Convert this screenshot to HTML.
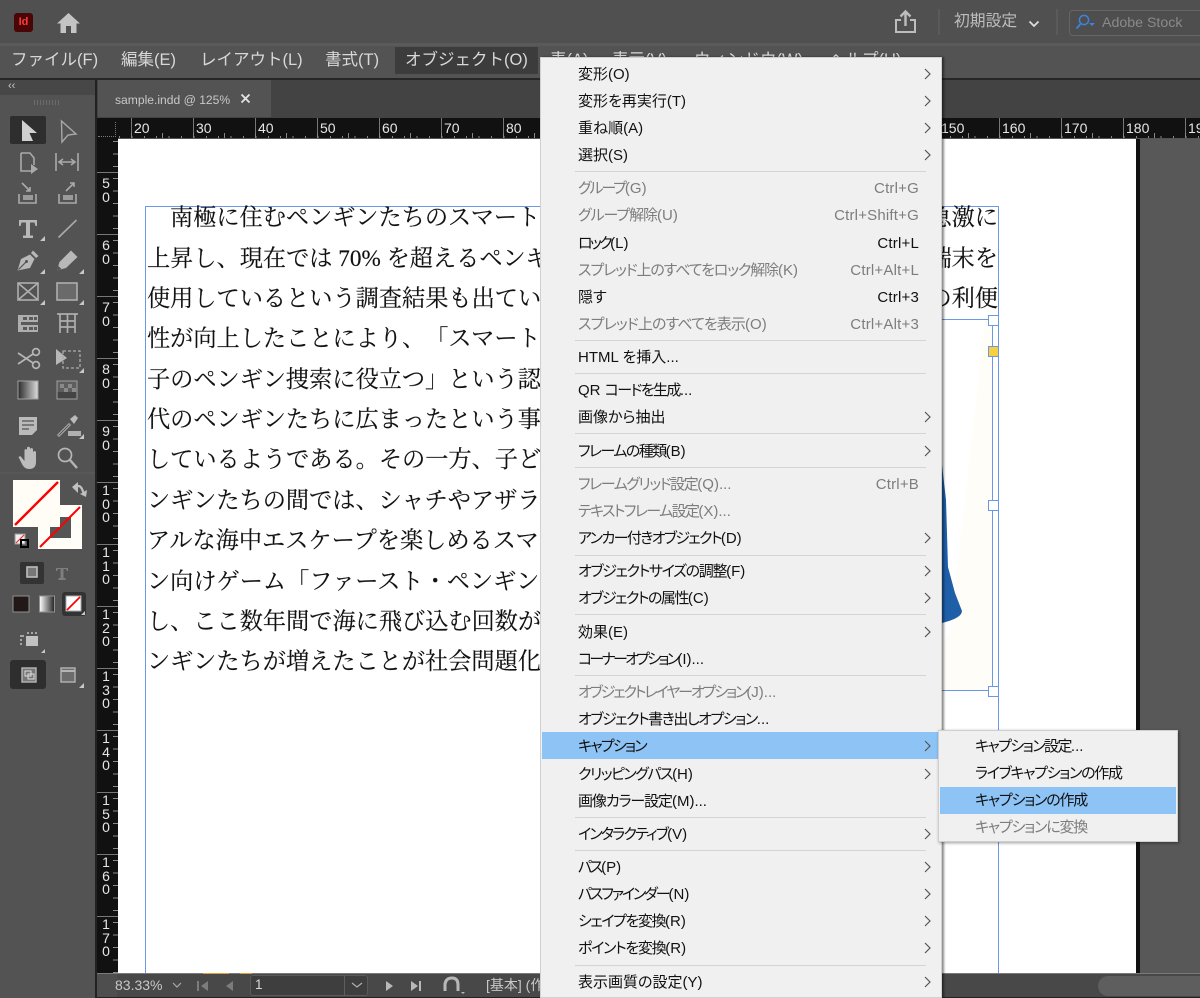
<!DOCTYPE html>
<html lang="ja"><head><meta charset="utf-8"><title>InDesign</title>
<style>
html,body{margin:0;padding:0;background:#535353}
#r{position:relative;width:1200px;height:998px;overflow:hidden;background:#535353;font-family:"Liberation Sans","Noto Sans CJK JP",sans-serif}
#r div,#r span,#r svg{position:absolute}
i{font-style:normal;letter-spacing:0}
.mb{top:48px;height:24px;line-height:24px;font-size:16.5px;color:#d8d8d8;white-space:nowrap}
.h{top:118px;height:20px;line-height:21px;font-size:14px;color:#e6e6e6;background:none}
.v{left:100px;width:12px;font-size:14px;line-height:14px;color:#e6e6e6;text-align:center}
.t{left:147px;height:40px;line-height:40px;font-size:23.2px;color:#111;white-space:nowrap;font-family:"Liberation Serif","Noto Serif CJK JP","Noto Serif CJK SC",serif;text-spacing-trim:space-all;-webkit-text-stroke:.15px #111;margin-top:1px}
.rt{left:auto;right:202px}
.m{left:578px;height:20px;line-height:20px;font-size:15px;color:#111;white-space:nowrap;font-feature-settings:"palt";margin-top:1px}
.k{left:auto;right:281px;height:20px;line-height:20px;font-size:15px;letter-spacing:.2px;color:#111;white-space:nowrap;margin-top:1px}
.s{left:975px;height:20px;line-height:20px;font-size:15px;color:#111;white-space:nowrap;font-feature-settings:"palt";margin-top:1px}
.m.d,.k.d,.s.d{color:#7d7d7d}
.sep{left:575px;width:351px;height:1px;background:#d4d4d4}
svg{overflow:visible}
</style></head><body><div id="r">

<!-- top bar -->
<div style="left:0;top:0;width:1200px;height:43px;background:#505050"></div>
<div style="left:0;top:43px;width:1200px;height:3px;background:#5a5a5a"></div>
<div style="left:0;top:46px;width:1200px;height:32px;background:#535353"></div>
<div style="left:14px;top:13px;width:19px;height:19px;background:#4a0606;border-radius:3px"></div>
<span style="left:14px;top:13px;width:19px;height:19px;line-height:19px;text-align:center;font-size:11px;font-weight:bold;color:#ff3a3a">Id</span>
<svg style="left:56px;top:12px" width="25" height="22" viewBox="0 0 25 22"><path d="M12.5 1 L24 11.5 L20.5 11.5 L20.5 21 L15 21 L15 14 L10 14 L10 21 L4.5 21 L4.5 11.5 L1 11.5 Z" fill="#c4c4c4"/></svg>
<svg style="left:894px;top:10px" width="24" height="24" viewBox="0 0 24 24"><path d="M7 10 H2 V22 H21 V10 H16" fill="none" stroke="#bdbdbd" stroke-width="2"/><path d="M11.5 16 V2 M6.500 6.500 L11.500 1.500 L16.500 6.500" fill="none" stroke="#bdbdbd" stroke-width="2.400"/></svg>
<div style="left:938px;top:9px;width:2px;height:26px;background:#5a5a5a"></div>
<span style="left:954px;top:12px;font-size:15.800px;line-height:20px;color:#bdbdbd;white-space:nowrap">初期設定</span>
<svg style="left:1028px;top:20px" width="12" height="8" viewBox="0 0 12 8"><path d="M1.500 1.500 L6 6 L10.500 1.500" fill="none" stroke="#ddd" stroke-width="1.800"/></svg>
<div style="left:1056px;top:9px;width:2px;height:26px;background:#5a5a5a"></div>
<div style="left:1069px;top:10px;width:140px;height:24px;border:1px solid #656565;border-radius:4px;background:#4e4e4e"></div>
<svg style="left:1075px;top:14px" width="24" height="16" viewBox="0 0 24 16"><circle cx="9" cy="6" r="4.600" fill="none" stroke="#3f82e0" stroke-width="1.500"/><path d="M5.500 10 L1.500 14.500" stroke="#3f82e0" stroke-width="1.800"/><path d="M14 9 H20 L17 12 Z" fill="#3f82e0"/></svg>
<span style="left:1102px;top:13px;font-size:14.200px;line-height:20px;color:#8a8a8a;white-space:nowrap">Adobe Stock</span>

<!-- menu bar -->
<span class="mb" style="left:11px">ファイル(F)</span>
<span class="mb" style="left:121px">編集(E)</span>
<span class="mb" style="left:200px">レイアウト(L)</span>
<span class="mb" style="left:325px">書式(T)</span>
<div style="left:395px;top:47px;width:143px;height:27px;background:#3c3c3c"></div>
<span class="mb" style="left:405px">オブジェクト(O)</span>
<span class="mb" style="left:550px">表(A)</span>
<span class="mb" style="left:612px">表示(V)</span>
<span class="mb" style="left:694px">ウィンドウ(W)</span>
<span class="mb" style="left:829px">ヘルプ(H)</span>
<div style="left:0;top:78px;width:1200px;height:2px;background:#262626"></div>

<!-- tab bar -->
<div style="left:97px;top:80px;width:1103px;height:38px;background:#434343"></div>
<div style="left:98px;top:80px;width:173px;height:37px;background:#535353"></div>
<span style="left:115px;top:90px;font-size:12.100px;line-height:20px;color:#c8c8c8;white-space:nowrap">sample.indd @ 125%</span>
<svg style="left:240px;top:93px" width="11" height="11" viewBox="0 0 11 11"><path d="M1.500 1.500 L9.500 9.500 M9.500 1.500 L1.500 9.500" stroke="#e4e4e4" stroke-width="1.800"/></svg>

<!-- left panel -->
<div style="left:0;top:80px;width:95px;height:918px;background:#535353"></div>
<div style="left:0;top:80px;width:95px;height:15px;background:#474747"></div>
<span style="left:8px;top:80px;font-size:11px;line-height:13px;color:#c8c8c8">‹‹</span>
<div style="left:34px;top:100px;width:26px;height:5px;background:repeating-linear-gradient(90deg,#6c6c6c 0 1px,#535353 1px 3px)"></div>
<div style="left:95px;top:80px;width:2px;height:918px;background:#222"></div>

<!-- left tools -->
<svg style="left:0;top:110px" width="95" height="600" viewBox="0 110 95 600">
 <rect x="10" y="116" width="36" height="28" rx="2" fill="#2e2e2e"/>
 <path d="M22 120 L37 133 L29.500 133 L33 141 L22 141 Z" fill="#d0d0d0"/>
 <path d="M61.500 121 L76 134 L68 135 L62 142 Z" fill="none" stroke="#a8a8a8" stroke-width="1.400"/>
 <g fill="none" stroke="#aaa" stroke-width="1.600">
  <path d="M21 153 H30 L34 158 V165 M21 153 V171 H31"/>
  <path d="M56 153 V171 M78 153 V171 M60 162 H74 M63 159 L59 162 L63 165 M71 159 L75 162 L71 165"/>
  <path d="M19 194 V203 H36 V194 M22 183 L30 191 M26 191 H30 V187"/>
  <path d="M59 194 V203 H76 V194 M66 191 L74 183 M70 183 H74 V187"/>
 </g>
 <path d="M31 164 L38 169 L31 174 Z" fill="#aaa"/>
 <rect x="23" y="195" width="10" height="5" fill="#9a9a9a"/><rect x="63" y="195" width="10" height="5" fill="#9a9a9a"/>
 <!-- T, line -->
 <path d="M19 220 H37 V226 H35.500 L34.500 222.500 H30 V235.500 H33 V238 H23 V235.500 H26 V222.500 H21.500 L20.500 226 H19 Z" fill="#b8b8b8"/>
 <path d="M58.500 237.500 L76.500 220" stroke="#aaa" stroke-width="1.600"/>
 <!-- pen nib -->
 <path d="M17.500 270.500 L21 259 L30 254.500 L34.500 259 L30 268 Z" fill="#b8b8b8"/>
 <path d="M31 253 L33 250.500 L38.500 256 L36 258 Z" fill="#b8b8b8"/>
 <path d="M18.500 269.500 L26 262" stroke="#535353" stroke-width="1.200"/><circle cx="26.500" cy="261.500" r="1.500" fill="#535353"/>
 <!-- pencil -->
 <path d="M57 270.500 L59.500 262 L71 250.500 L77.500 257 L66 268 Z" fill="#b8b8b8"/>
 <path d="M57 270.500 L58.400 266 L61.500 269 Z" fill="#535353"/>
 <!-- frame, rect -->
 <g fill="none" stroke="#aeaeae" stroke-width="1.600"><rect x="18" y="283" width="20" height="17"/><path d="M18 283 L38 300 M38 283 L18 300"/></g>
 <rect x="57" y="283" width="20" height="17" fill="#6a6a6a" stroke="#aeaeae" stroke-width="1.600"/>
 <!-- tables -->
 <rect x="18" y="315" width="20" height="17" fill="#aeaeae"/>
 <path d="M23 317 h4v3h-4z M29 317 h4v3h-4z M34 317 h3v3h-3z M23 327 h4v3h-4z M29 327 h4v3h-4z M34 327 h3v3h-3z" fill="#5a5a5a"/>
 <rect x="21" y="322" width="17" height="3" fill="#5a5a5a"/>
 <g fill="none" stroke="#aeaeae" stroke-width="1.700"><path d="M57 314 H78 M60 314 V333 M67.500 314 V333 M75 314 V333 M60 321 H75 M60 327 H75"/></g>
 <!-- scissors, transform -->
 <g fill="none" stroke="#b5b5b5" stroke-width="1.700"><circle cx="36" cy="352" r="3.400"/><circle cx="36" cy="365" r="3.400"/><path d="M33 354 L18 364 M33 363 L18 353"/></g>
 <path d="M56 349 L67 358 L56 365 Z" fill="#b8b8b8"/>
 <rect x="63" y="351" width="17" height="17" fill="none" stroke="#aaa" stroke-width="1.300" stroke-dasharray="3 2"/>
 <!-- gradients -->
 <defs><linearGradient id="g1"><stop offset="0" stop-color="#2b2b2b"/><stop offset="1" stop-color="#dcdcdc"/></linearGradient></defs>
 <rect x="18" y="381" width="20" height="18" fill="url(#g1)" stroke="#a0a0a0"/>
 <rect x="57" y="381" width="20" height="18" fill="#5e5e5e" stroke="#a0a0a0"/>
 <path d="M57.500 392 H76.500 V398.500 H57.500 Z" fill="#444"/>
 <path d="M60 384 h4v4h-4z M68 384 h4v4h-4z M64 388 h4v4h-4z M72 388 h4v4h-4z" fill="#8a8a8a"/>
 <!-- note, eyedropper -->
 <path d="M19 417 H37 V430 L32 435 H19 Z" fill="#bababa"/>
 <path d="M22 421 H34 M22 425 H34 M22 429 H29" stroke="#535353" stroke-width="1.200"/>
 <path d="M58 436 L70 424" stroke="#b5b5b5" stroke-width="3"/><path d="M58.500 435.500 L69.500 424.500" stroke="#535353" stroke-width="1"/><path d="M70 419 L75 415 L78 418 L74 424 Z" fill="#bababa"/>
 <rect x="68" y="431" width="13" height="5" fill="#b0b0b0"/>
 <!-- hand, magnifier -->
 <path d="M18.500 457 Q20.500 455 22 458 L24.500 461 V450 Q25.500 448 27 450 V458 V447.500 Q28.500 446 30 447.500 V458 V449 Q31.500 447 33 449 V459 V452 Q34.500 450 36 452 V462 Q36 469 29 469 Q25 469 22.500 465 Z" fill="#bcbcbc"/>
 <circle cx="65" cy="455" r="6.500" fill="none" stroke="#b5b5b5" stroke-width="1.700"/><path d="M70 460 L77 468" stroke="#b5b5b5" stroke-width="2.400"/>
 <!-- small triangles -->
 <g fill="#c8c8c8"><path d="M45 241 V236 L40 241 Z M45 274 V269 L40 274 Z M84 274 V269 L79 274 Z M45 305 V300 L40 305 Z M84 305 V300 L79 305 Z M84 373 V368 L79 373 Z M84 439 V434 L79 439 Z"/></g>
 <path d="M0 473 H95" stroke="#5d5d5d"/>
 <!-- swap arrow -->
 <path d="M74 489 Q79 483 82 489 L84 494" fill="none" stroke="#c0c0c0" stroke-width="2.200"/><path d="M72 487 L78 482 L78 493 Z M80 494 L87 490 L86 497 Z" fill="#c0c0c0"/>
 <!-- stroke swatch -->
 <rect x="38" y="505" width="44" height="44" fill="#fffdf8"/><rect x="50" y="517" width="21" height="21" fill="#555"/>
 <path d="M40 547 L80 507" stroke="#f00" stroke-width="2"/>
 <!-- fill swatch -->
 <rect x="13" y="480" width="47" height="47" fill="#fffdf6"/>
 <path d="M15 525 L58 482" stroke="#f00" stroke-width="2.400"/>
 <!-- default -->
 <rect x="15" y="534" width="10" height="10" fill="#eee" stroke="#999"/>
 <path d="M16 543 L24 535" stroke="#e33" stroke-width="1.200"/>
 <rect x="21" y="540" width="7" height="7" fill="none" stroke="#000" stroke-width="2"/>
 <!-- container/text -->
 <rect x="20" y="562" width="24" height="22" rx="2" fill="#333"/>
 <rect x="27" y="567" width="10" height="10" fill="#777" stroke="#bdbdbd" stroke-width="1.600"/>
 <path d="M56 568 H68 V571 H67 L66 569 H63.500 V578 H65.500 V580 H58.500 V578 H60.500 V569 H58 L57 571 H56 Z" fill="#7e7e7e"/>
 <!-- apply -->
 <rect x="13" y="596" width="16" height="16" fill="#211817" stroke="#919191"/>
 <defs><linearGradient id="g2"><stop offset="0" stop-color="#fff"/><stop offset="1" stop-color="#222"/></linearGradient></defs>
 <rect x="39.500" y="596" width="15" height="16" fill="url(#g2)" stroke="#919191"/>
 <rect x="62" y="592" width="24" height="24" rx="3" fill="#333"/>
 <rect x="66" y="596" width="15" height="15" fill="#fff" stroke="#aaa"/>
 <path d="M67 610 L80 597" stroke="#f00" stroke-width="1.800"/><path d="M85 615 V611 L81 615 Z" fill="#c8c8c8"/>
 <!-- layout grid icon -->
 <rect x="26" y="636" width="12" height="10" fill="#c2c2c2"/>
 <path d="M27 633 H38 M21 635 V646 M24 636 H21" stroke="#c2c2c2" stroke-width="1.500" stroke-dasharray="2 2" fill="none"/>
 <path d="M45 653 V649 L41 653 Z" fill="#c8c8c8"/>
 <!-- screen mode -->
 <rect x="10" y="660" width="36" height="29" rx="3" fill="#2e2e2e"/>
 <rect x="22" y="668" width="14" height="14" fill="#777" stroke="#b8b8b8" stroke-width="1.400"/>
 <rect x="25" y="671" width="6" height="5" fill="none" stroke="#ddd"/><rect x="28" y="674" width="6" height="5" fill="none" stroke="#ddd"/>
 <rect x="61" y="668" width="14" height="14" fill="#6c6c6c" stroke="#b5b5b5" stroke-width="1.400"/><path d="M61 671 H75" stroke="#b5b5b5" stroke-width="2"/>
 <path d="M84 688 V683 L79 688 Z" fill="#c8c8c8"/>
</svg>

<!-- rulers -->
<div style="left:97px;top:118px;width:1103px;height:20px;background:#111"></div>
<div style="left:97px;top:138px;width:21px;height:835px;background:#111"></div>
<div style="left:98px;top:122px;width:18px;height:15px;border-right:1px dotted #777;border-bottom:1px dotted #777;box-sizing:border-box"></div>
<div style="left:118px;top:118px;width:1082px;height:20px;background:repeating-linear-gradient(90deg,#777 0 1px,transparent 1px 62px);background-position:13px 0"></div>
<div style="left:118px;top:136px;width:1082px;height:2px;background:repeating-linear-gradient(90deg,#888 0 1px,transparent 1px 12.400px);background-position:1px 0"></div>
<div style="left:118px;top:133px;width:1082px;height:5px;background:repeating-linear-gradient(90deg,#888 0 1px,transparent 1px 31px);background-position:13px 0"></div>
<div style="left:97px;top:172px;width:21px;height:801px;background:repeating-linear-gradient(180deg,#777 0 1px,transparent 1px 62px)"></div>
<div style="left:113px;top:141px;width:5px;height:832px;background:repeating-linear-gradient(180deg,#8a8a8a 0 1px,transparent 1px 12.400px)"></div>
<span class="h" style="left:134px">20</span><span class="h" style="left:196px">30</span><span class="h" style="left:258px">40</span><span class="h" style="left:320px">50</span><span class="h" style="left:382px">60</span><span class="h" style="left:444px">70</span><span class="h" style="left:506px">80</span>
<span class="h" style="left:941px">150</span><span class="h" style="left:1002px">160</span><span class="h" style="left:1064px">170</span><span class="h" style="left:1126px">180</span><span class="h" style="left:1188px">190</span>
<div class="v" style="top:176px">5<br>0</div><div class="v" style="top:238px">6<br>0</div><div class="v" style="top:300px">7<br>0</div><div class="v" style="top:362px">8<br>0</div><div class="v" style="top:424px">9<br>0</div>
<div class="v" style="top:484px;line-height:13.500px">1<br>0<br>0</div><div class="v" style="top:546px;line-height:13.500px">1<br>1<br>0</div><div class="v" style="top:608px;line-height:13.500px">1<br>2<br>0</div><div class="v" style="top:670px;line-height:13.500px">1<br>3<br>0</div><div class="v" style="top:732px;line-height:13.500px">1<br>4<br>0</div><div class="v" style="top:794px;line-height:13.500px">1<br>5<br>0</div><div class="v" style="top:856px;line-height:13.500px">1<br>6<br>0</div><div class="v" style="top:918px;line-height:13.500px">1<br>7<br>0</div>

<!-- page -->
<div style="left:118px;top:139px;width:1018px;height:834px;background:#fff"></div>
<div style="left:1136px;top:139px;width:4px;height:834px;background:#111"></div>
<div style="left:1140px;top:139px;width:60px;height:834px;background:#585858"></div>

<!-- image frame -->
<svg style="left:900px;top:320px" width="100" height="372" viewBox="900 320 100 372"><path d="M985 320 H992 V691 H900 V640 H945 L950 633 Z" fill="#fffdf8"/></svg>
<div style="left:700px;top:319px;width:293px;height:372px;box-sizing:border-box;border:1px solid #6b98e6"></div>
<svg style="left:900px;top:460px" width="70" height="170" viewBox="900 460 70 170"><path d="M900 465 H942 L946 500 L948 567 L955 593 L962 611 Q962 618 942 623 H900 Z" fill="#1f5fa8"/></svg>
<div style="left:145px;top:206px;width:854px;height:767px;box-sizing:border-box;border:1px solid #6b98e6;border-bottom:0"></div>
<div style="left:988px;top:315px;width:9px;height:9px;background:#fff;border:1px solid #6b98e6"></div>
<div style="left:988px;top:346px;width:9px;height:9px;background:#f7cf3f;border:1px solid #6b98e6"></div>
<div style="left:988px;top:500px;width:9px;height:9px;background:#fff;border:1px solid #6b98e6"></div>
<div style="left:988px;top:686px;width:9px;height:9px;background:#fff;border:1px solid #6b98e6"></div>

<!-- body text -->
<div class="t" style="top:197px;left:170px">南極に住むペンギンたちのスマートフォン</div>
<div class="t" style="top:238px">上昇し、現在では 70% を超えるペンギン</div>
<div class="t" style="top:278px">使用しているという調査結果も出ている</div>
<div class="t" style="top:318px">性が向上したことにより、「スマートフ</div>
<div class="t" style="top:359px">子のペンギン捜索に役立つ」という認識</div>
<div class="t" style="top:399px">代のペンギンたちに広まったという事情</div>
<div class="t" style="top:439px">しているようである。その一方、子ども</div>
<div class="t" style="top:480px">ンギンたちの間では、シャチやアザラシ</div>
<div class="t" style="top:520px">アルな海中エスケープを楽しめるスマホ</div>
<div class="t" style="top:561px">ン向けゲーム「ファースト・ペンギン」</div>
<div class="t" style="top:601px">し、ここ数年間で海に飛び込む回数が増</div>
<div class="t" style="top:641px">ンギンたちが増えたことが社会問題化し</div>
<div class="t rt" style="top:197px">急激に</div>
<div class="t rt" style="top:238px">端末を</div>
<div class="t rt" style="top:278px">の利便</div>

<!-- status bar -->
<div style="left:97px;top:973px;width:1103px;height:25px;background:#484848;border-top:1px solid #7a7a7a;box-sizing:border-box"></div>
<div style="left:203px;top:973px;width:26px;height:1px;background:#e0a030"></div><div style="left:240px;top:973px;width:12px;height:1px;background:#e0a030"></div>
<div style="left:97px;top:974px;width:20px;height:24px;background:#4e4e4e"></div>
<div style="left:1098px;top:976px;width:102px;height:20px;background:#5e5e5e;border-radius:10px 0 0 10px"></div>
<div style="left:97px;top:997px;width:1103px;height:1px;background:#222"></div>
<span style="left:115px;top:975px;font-size:14px;line-height:20px;color:#c8c8c8;white-space:nowrap">83.33%</span>
<svg style="left:172px;top:982px" width="10" height="6" viewBox="0 0 10 6"><path d="M1 1 L5 5 L9 1" fill="none" stroke="#aaa" stroke-width="1.200"/></svg>
<svg style="left:197px;top:979px" width="40" height="14" viewBox="0 0 40 14"><path d="M1 2 V12" stroke="#7c7c7c" stroke-width="2"/><path d="M11 2 V12 L4 7 Z M36 2 V12 L29 7 Z" fill="#7c7c7c"/></svg>
<div style="left:250px;top:975px;width:118px;height:21px;background:#3e3e3e;border:1px solid #5a5a5a;border-radius:3px;box-sizing:border-box"></div>
<div style="left:344px;top:976px;width:1px;height:19px;background:#5e5e5e"></div>
<span style="left:255px;top:975px;font-size:13.500px;line-height:20px;color:#d8d8d8">1</span>
<svg style="left:351px;top:982px" width="12" height="6" viewBox="0 0 12 6"><path d="M1 1 L6 5 L11 1" fill="none" stroke="#b0b0b0" stroke-width="1.200"/></svg>
<svg style="left:384px;top:979px" width="40" height="14" viewBox="0 0 40 14"><path d="M2 2 V12 L9 7 Z M27 2 V12 L34 7 Z" fill="#b8b8b8"/><path d="M36 2 V12" stroke="#b8b8b8" stroke-width="2"/></svg>
<svg style="left:443px;top:976px" width="22" height="20" viewBox="0 0 22 20"><path d="M2 15 V8 Q3 2 9 2 Q15 2 15 9 V15" fill="none" stroke="#b8b8b8" stroke-width="3"/><circle cx="11" cy="6" r="1.500" fill="#484848"/><path d="M18 16 H22 L20 18 Z" fill="#b8b8b8"/></svg>
<span style="left:486px;top:975px;font-size:14px;line-height:20px;color:#c8c8c8;white-space:nowrap">[基本] (作業)</span>

<!-- main menu -->
<div style="left:540px;top:57px;width:402px;height:941px;background:#f0f0f0;border:1px solid #d0d0d0;box-sizing:border-box;box-shadow:2px 0 2px rgba(0,0,0,.45)"></div>
<div style="left:542px;top:732px;width:396px;height:27px;background:#8dc3f5"></div>
<div class="sep" style="top:171px"></div><div class="sep" style="top:340px"></div><div class="sep" style="top:373px"></div><div class="sep" style="top:433px"></div><div class="sep" style="top:467px"></div><div class="sep" style="top:555px"></div><div class="sep" style="top:614px"></div><div class="sep" style="top:675px"></div><div class="sep" style="top:817px"></div><div class="sep" style="top:850px"></div><div class="sep" style="top:965px"></div>

<span class="m" style="top:64px">変形(O)</span>
<span class="m" style="top:91px">変形を再実行(T)</span>
<span class="m" style="top:118px">重ね順(A)</span>
<span class="m" style="top:145px">選択(S)</span>
<span class="m d" style="top:178px;letter-spacing:-2.100px">グループ<i>(G)</i></span>
<span class="m d" style="top:205px;letter-spacing:-1.050px">グループ解除<i>(U)</i></span>
<span class="m" style="top:233px;letter-spacing:-2.600px">ロック<i>(L)</i></span>
<span class="m d" style="top:260px;letter-spacing:-1.130px">スプレッド上のすべてをロック解除<i>(K)</i></span>
<span class="m" style="top:287px">隠す</span>
<span class="m d" style="top:314px;letter-spacing:-.86px">スプレッド上のすべてを表示<i>(O)</i></span>
<span class="m" style="top:347px">HTML を挿入...</span>
<span class="m" style="top:380px;letter-spacing:-1.600px"><i>QR </i>コードを生成<i>...</i></span>
<span class="m" style="top:407px">画像から抽出</span>
<span class="m" style="top:441px;letter-spacing:-1.570px">フレームの種類<i>(B)</i></span>
<span class="m d" style="top:474px;letter-spacing:-1.440px">フレームグリッド設定<i>(Q)...</i></span>
<span class="m d" style="top:501px;letter-spacing:-1.600px">テキストフレーム設定<i>(X)...</i></span>
<span class="m" style="top:528px;letter-spacing:-1.630px">アンカー付きオブジェクト<i>(D)</i></span>
<span class="m" style="top:561px;letter-spacing:-1.340px">オブジェクトサイズの調整<i>(F)</i></span>
<span class="m" style="top:588px;letter-spacing:-1.500px">オブジェクトの属性<i>(C)</i></span>
<span class="m" style="top:622px">効果(E)</span>
<span class="m" style="top:649px;letter-spacing:-2.750px">コーナーオプション<i>(I)...</i></span>
<span class="m d" style="top:682px;letter-spacing:-2.100px">オブジェクトレイヤーオプション<i>(J)...</i></span>
<span class="m" style="top:709px;letter-spacing:-1.460px">オブジェクト書き出しオプション<i>...</i></span>
<span class="m" style="top:736px;letter-spacing:-1.750px">キャプション</span>
<span class="m" style="top:764px;letter-spacing:-1.500px">クリッピングパス<i>(H)</i></span>
<span class="m" style="top:791px;letter-spacing:-1.100px">画像カラー設定<i>(M)...</i></span>
<span class="m" style="top:824px;letter-spacing:-1.800px">インタラクティブ<i>(V)</i></span>
<span class="m" style="top:857px;letter-spacing:-2.250px">パス<i>(P)</i></span>
<span class="m" style="top:884px;letter-spacing:-2.100px">パスファインダー<i>(N)</i></span>
<span class="m" style="top:911px;letter-spacing:-1.430px">シェイプを変換<i>(R)</i></span>
<span class="m" style="top:938px;letter-spacing:-1.300px">ポイントを変換<i>(R)</i></span>
<span class="m" style="top:972px">表示画質の設定(Y)</span>

<span class="k d" style="top:178px">Ctrl+G</span>
<span class="k d" style="top:205px">Ctrl+Shift+G</span>
<span class="k" style="top:233px">Ctrl+L</span>
<span class="k d" style="top:260px">Ctrl+Alt+L</span>
<span class="k" style="top:287px">Ctrl+3</span>
<span class="k d" style="top:314px">Ctrl+Alt+3</span>
<span class="k d" style="top:474px">Ctrl+B</span>

<svg style="left:0;top:0" width="1200" height="998" viewBox="0 0 1200 998"><g fill="none" stroke="#555" stroke-width="1.200">
<path d="M925 69 L930 74 L925 79 M925 96 L930 101 L925 106 M925 123 L930 128 L925 133 M925 150 L930 155 L925 160 M925 412 L930 417 L925 422 M925 446 L930 451 L925 456 M925 533 L930 538 L925 543 M925 566 L930 571 L925 576 M925 593 L930 598 L925 603 M925 627 L930 632 L925 637 M925 741 L930 746 L925 751 M925 769 L930 774 L925 779 M925 829 L930 834 L925 839 M925 862 L930 867 L925 872 M925 889 L930 894 L925 899 M925 916 L930 921 L925 926 M925 943 L930 948 L925 953 M925 977 L930 982 L925 987"/></g></svg>

<!-- submenu -->
<div style="left:938px;top:730px;width:240px;height:112px;background:#f0f0f0;border:1px solid #cfcfcf;box-sizing:border-box;box-shadow:1px 1px 3px rgba(0,0,0,.4)"></div>
<div style="left:940px;top:787px;width:236px;height:27px;background:#8dc3f5"></div>
<span class="s" style="top:736px;letter-spacing:-1.570px">キャプション設定<i>...</i></span>
<span class="s" style="top:763px;letter-spacing:-1.300px">ライブキャプションの作成</span>
<span class="s" style="top:790px;letter-spacing:-1.200px">キャプションの作成</span>
<span class="s d" style="top:817px;letter-spacing:-1.200px">キャプションに変換</span>

</div></body></html>
